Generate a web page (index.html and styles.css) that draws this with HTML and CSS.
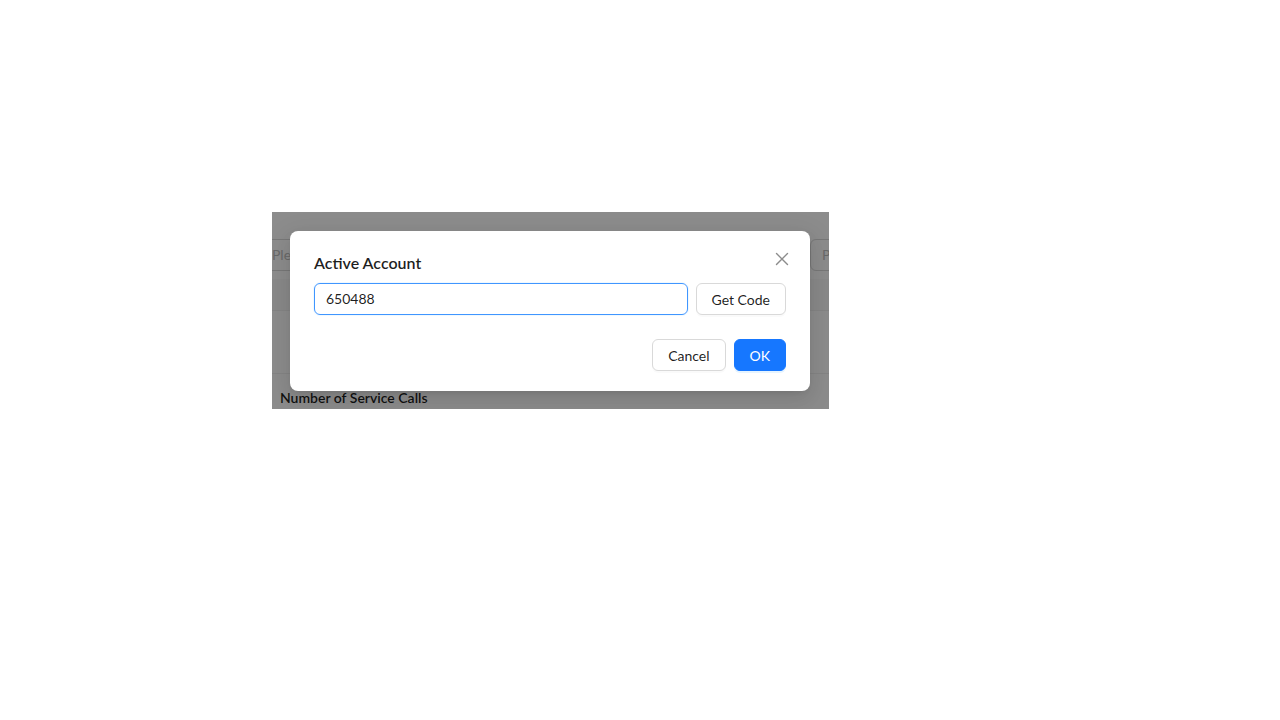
FILE: index.html
```html
<!DOCTYPE html>
<html>
<head>
<meta charset="utf-8">
<link rel="stylesheet" href="styles.css">
</head>
<body>
<div class="frame">
  <div class="page">
    <div class="filters">
      <div class="field field-left">Please enter</div>
      <div class="field field-right">Please enter</div>
    </div>
    <div class="thead"></div>
    <div class="trow"></div>
    <div class="section-title">Number of Service Calls</div>
  </div>
  <div class="mask"></div>
  <div class="modal">
    <div class="modal-title">Active Account</div>
    <button class="close" aria-label="Close">
      <svg width="14" height="14" viewBox="0 0 14 14"><path d="M1.5 1.5 L12.5 12.5 M12.5 1.5 L1.5 12.5" stroke="#8c8c8c" stroke-width="1.4" fill="none" stroke-linecap="round"/></svg>
    </button>
    <div class="modal-body">
      <div class="input">650488</div>
      <button class="btn">Get Code</button>
    </div>
    <div class="modal-footer">
      <button class="btn">Cancel</button>
      <button class="btn btn-primary">OK</button>
    </div>
  </div>
</div>
</body>
</html>
```

FILE: styles.css
```css
html, body {
  margin: 0;
  padding: 0;
  background: #ffffff;
  font-family: "Lato", "Noto Sans", "Liberation Sans", sans-serif;
}

.frame {
  position: relative;
  margin-left: 272px;
  margin-top: 212px;
  width: 557px;
  height: 197px;
  overflow: hidden;
  background: #ffffff;
}

.page {
  display: flex;
  flex-direction: column;
}

.filters {
  display: flex;
  justify-content: space-between;
  padding-top: 27px;
  height: 32px;
}

.field {
  height: 30px;
  border: 1px solid #d9d9d9;
  border-radius: 6px;
  font-size: 14px;
  line-height: 30px;
  color: #bfbfbf;
  padding: 0 11px;
  box-sizing: content-box;
  white-space: nowrap;
}

.field-left {
  width: 200px;
  margin-left: -12px;
}

.field-right {
  width: 200px;
  margin-right: -205px;
}

.thead {
  margin-top: 8px;
  height: 31px;
  background: #fafafa;
  border-bottom: 1px solid #f0f0f0;
}

.trow {
  height: 62px;
  border-bottom: 1px solid #f0f0f0;
}

.section-title {
  padding: 15px 8px 0;
  font-size: 14px;
  font-weight: 600;
  color: rgba(0,0,0,0.88);
}

.mask {
  position: absolute;
  inset: 0;
  background: rgba(0,0,0,0.45);
}

.modal {
  position: absolute;
  left: 18px;
  top: 19px;
  width: 520px;
  box-sizing: border-box;
  background: #ffffff;
  border-radius: 8px;
  padding: 20px 24px;
  box-shadow: 0 6px 16px 0 rgba(0,0,0,0.08), 0 3px 6px -4px rgba(0,0,0,0.12), 0 9px 28px 8px rgba(0,0,0,0.05);
}

.modal-title {
  font-size: 16px;
  font-weight: 600;
  line-height: 24px;
  color: rgba(0,0,0,0.88);
  margin-bottom: 8px;
}

.close {
  position: absolute;
  top: 17px;
  right: 17px;
  width: 22px;
  height: 22px;
  padding: 0;
  border: 0;
  background: transparent;
  display: flex;
  align-items: center;
  justify-content: center;
}

.modal-body {
  display: flex;
  gap: 8px;
  margin-bottom: 24px;
}

.input {
  flex: 1;
  height: 32px;
  box-sizing: border-box;
  border: 1px solid #4096ff;
  border-radius: 6px;
  padding: 0 11px;
  font-size: 14px;
  line-height: 30px;
  color: rgba(0,0,0,0.88);
  box-shadow: 0 0 0 1px rgba(5,145,255,0.06);
}

.btn {
  height: 32px;
  box-sizing: border-box;
  border: 1px solid #d9d9d9;
  border-radius: 6px;
  background: #ffffff;
  padding: 0 15px;
  font-family: inherit;
  font-size: 14px;
  color: rgba(0,0,0,0.88);
  box-shadow: 0 2px 0 rgba(0,0,0,0.02);
}

.modal-footer {
  display: flex;
  justify-content: flex-end;
  gap: 8px;
}

.btn-primary {
  background: #1677ff;
  border-color: #1677ff;
  color: #ffffff;
  box-shadow: 0 2px 0 rgba(5,145,255,0.1);
}
```
